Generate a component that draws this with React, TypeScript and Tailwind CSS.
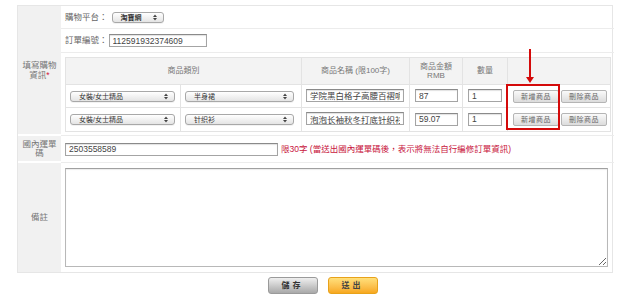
import React from "react";

const font = "font-['Liberation_Sans','Noto_Sans_CJK_TC',sans-serif]";

function UpDown() {
  return (
    <svg width="4" height="7" viewBox="0 0 4 7" className="shrink-0">
      <path d="M0 3 L2 0.5 L4 3 Z" fill="#444" />
      <path d="M0 4 L2 6.5 L4 4 Z" fill="#444" />
    </svg>
  );
}

function FakeSelect({ label, w, bold = false }: { label: string; w: string; bold?: boolean }) {
  return (
    <div
      className={`${w} h-[11px] rounded-[3px] border border-[#a8a8a8] bg-gradient-to-b from-white to-[#e4e4e4] flex items-center justify-between pl-[8px] pr-[6px] text-[7px] leading-none text-[#333] shadow-[0_1px_0_rgba(0,0,0,0.05)] ${bold ? "font-bold" : ""}`}
    >
      <span>{label}</span>
      <UpDown />
    </div>
  );
}

function TextBox({ value, w }: { value: string; w: string }) {
  return (
    <input
      readOnly
      value={value}
      className={`${w} h-[13px] border border-[#a4a4a4] border-t-[#8a8a8a] bg-white px-[3px] text-[8.5px] text-[#444] outline-none shadow-[inset_0_1px_1px_rgba(0,0,0,0.12)] ${font}`}
    />
  );
}

function SmallButton({ label }: { label: string }) {
  return (
    <button className="w-[46px] h-[13px] rounded-[2px] border border-[#b5b5b5] bg-gradient-to-b from-[#fafafa] to-[#dcdcdc] text-[7px] leading-none text-[#666] tracking-[0.5px]">
      {label}
    </button>
  );
}

export default function App() {
  const rows = [
    { cat: "女裝/女士精品", sub: "半身裙", name: "学院黑白格子高腰百褶呢子半身裙", price: "87", qty: "1" },
    { cat: "女裝/女士精品", sub: "针织衫", name: "泡泡长袖秋冬打底针织衫 女", price: "59.07", qty: "1" },
  ];

  return (
    <div className={`w-[640px] h-[304px] bg-white pt-[5px] relative ${font} text-[#666]`}>
      <div className="ml-[17px] w-[596px] grid grid-cols-[43px_553px] grid-rows-[23px_24px_83px_27px_109px] border border-[#e6e6e6]">
        {/* label: shopping info */}
        <div className="row-span-3 bg-[#f1f1f1] border-b-2 border-white flex flex-col items-center justify-center text-[8.5px] leading-[10px] text-[#777]">
          <span>填寫購物</span>
          <span>
            資訊<span className="text-[#d0103a]">*</span>
          </span>
        </div>

        <div className="border-b border-[#ececec] flex items-center pl-[4px] gap-[4px] text-[8.5px]">
          <span>購物平台：</span>
          <FakeSelect label="淘寶網" w="w-[52px]" bold />
        </div>

        <div className="border-b border-[#ececec] flex items-center pl-[4px] gap-[1px] text-[8.5px]">
          <span>訂單編號：</span>
          <TextBox value="112591932374609" w="w-[98px]" />
        </div>

        <div className="border-b border-[#ececec] pl-[4px] pr-[4px] pt-[4px]">
          <table className="table-fixed border-collapse w-[545px] text-[8px] text-[#777]">
            <colgroup>
              <col className="w-[115px]" />
              <col className="w-[121px]" />
              <col className="w-[108px]" />
              <col className="w-[53px]" />
              <col className="w-[45px]" />
              <col className="w-[103px]" />
            </colgroup>
            <thead>
              <tr className="h-[27px] bg-[#f3f3f3]">
                <th colSpan={2} className="border border-[#e3e3e3] font-normal">商品類別</th>
                <th className="border border-[#e3e3e3] font-normal">商品名稱 (限100字)</th>
                <th className="border border-[#e3e3e3] font-normal leading-[9px]">
                  商品金額
                  <br />
                  RMB
                </th>
                <th className="border border-[#e3e3e3] font-normal">數量</th>
                <th className="border border-[#e3e3e3]"></th>
              </tr>
            </thead>
            <tbody>
              {rows.map((r, i) => (
                <tr key={i} className={i === 0 ? "h-[23px]" : "h-[24px]"}>
                  <td className="border border-[#e3e3e3] pl-[4px]">
                    <FakeSelect label={r.cat} w="w-[105px]" />
                  </td>
                  <td className="border border-[#e3e3e3] pl-[4px]">
                    <FakeSelect label={r.sub} w="w-[109px]" />
                  </td>
                  <td className="border border-[#e3e3e3] pl-[4px]">
                    <TextBox value={r.name} w="w-[98px]" />
                  </td>
                  <td className="border border-[#e3e3e3] pl-[5px]">
                    <TextBox value={r.price} w="w-[43px]" />
                  </td>
                  <td className="border border-[#e3e3e3] pl-[5px]">
                    <TextBox value={r.qty} w="w-[34px]" />
                  </td>
                  <td className="border border-[#e3e3e3] pl-[5px]">
                    <div className="flex gap-[2px]">
                      <SmallButton label="新增商品" />
                      <SmallButton label="刪除商品" />
                    </div>
                  </td>
                </tr>
              ))}
            </tbody>
          </table>
        </div>

        {/* label: domestic tracking */}
        <div className="bg-[#f1f1f1] border-b-2 border-white flex flex-col items-center justify-center text-[8.5px] leading-[9px] text-[#777]">
          <span>國內運單</span>
          <span>碼</span>
        </div>
        <div className="border-b border-[#ececec] flex items-center pl-[4px] gap-[3px]">
          <TextBox value="2503558589" w="w-[213px]" />
          <span className="text-[8.5px] text-[#c8143c]">限30字 (當送出國內運單碼後，表示將無法自行編修訂單資訊)</span>
        </div>

        {/* label: note */}
        <div className="bg-[#f1f1f1] flex items-center justify-center text-[8.5px] text-[#777]">備註</div>
        <div className="pl-[4px] pt-[5px]">
          <textarea className="block w-[543px] h-[99px] border border-[#b8b8b8] border-t-[#a0a0a0] bg-white outline-none resize shadow-[inset_0_1px_1px_rgba(0,0,0,0.08)]" />
        </div>
      </div>

      <div className="flex justify-center gap-[10px] mt-[4px] pl-[5px]">
        <button className="w-[50px] h-[17px] rounded-[3px] border border-[#9a9a9a] bg-gradient-to-b from-[#efefef] to-[#a9a9a9] text-[8px] text-[#333] font-bold tracking-[3px]">
          儲存
        </button>
        <button className="w-[50px] h-[17px] rounded-[3px] border border-[#e8a21a] bg-gradient-to-b from-[#ffe07a] to-[#f7a81b] text-[8px] text-[#444] font-bold tracking-[3px]">
          送出
        </button>
      </div>

      {/* annotation: arrow + highlight box */}
      <div className="absolute left-[529px] top-[49px] w-[2px] h-[30px] bg-[#d40a0a]" />
      <svg className="absolute left-[526px] top-[77px]" width="8" height="6" viewBox="0 0 8 6">
        <path d="M0 0 L8 0 L4 6 Z" fill="#d40a0a" />
      </svg>
      <div className="absolute left-[506px] top-[84px] w-[54px] h-[46px] border-2 border-[#d40a0a]" />
    </div>
  );
}
